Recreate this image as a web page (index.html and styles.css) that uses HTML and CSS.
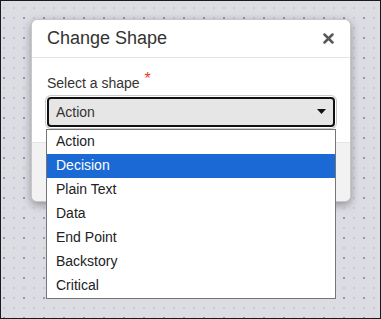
FILE: index.html
```html
<!DOCTYPE html>
<html>
<head>
<meta charset="utf-8">
<link rel="stylesheet" href="styles.css">
</head>
<body>
<div class="canvas">
  <div class="modal">
    <div class="modal-header">
      <span class="modal-title">Change Shape</span>
      <svg class="close" width="11" height="11" viewBox="0 0 11 11"><path d="M1.5 1.5 L9.5 9.5 M9.5 1.5 L1.5 9.5" stroke="#595959" stroke-width="2.5" stroke-linecap="round"/></svg>
    </div>
    <div class="modal-body">
      <div class="label">Select a shape <span class="req">*</span></div>
      <div class="select-wrap">
        <div class="select">
          <span>Action</span>
          <svg class="caret" width="9" height="5" viewBox="0 0 9 5"><path d="M0 0 H9 L4.5 5 Z" fill="#111"/></svg>
        </div>
        <ul class="options">
          <li>Action</li>
          <li class="active">Decision</li>
          <li>Plain Text</li>
          <li>Data</li>
          <li>End Point</li>
          <li>Backstory</li>
          <li>Critical</li>
        </ul>
      </div>
    </div>
    <div class="modal-footer"></div>
  </div>
</div>
</body>
</html>
```
FILE: styles.css
```css
* { box-sizing: border-box; }
html, body { margin: 0; padding: 0; }
body { font-family: "Liberation Sans", Arial, sans-serif; }
.canvas {
  width: 381px;
  height: 319px;
  border: 1px solid #1a1a1a;
  background-color: #dcdce3;
  background-image:
    conic-gradient(at 2px 2px, transparent 75%, #8e96ca 0),
    conic-gradient(at 2px 2px, transparent 75%, #c9cad9 0);
  background-size: 20px 20px, 10px 10px;
  background-position: 2px 16px, 2px 6px;
  padding: 18px 0 0 30px;
  overflow: hidden;
}
.modal {
  width: 320px;
  background: #fff;
  border: 1px solid rgba(0,0,0,0.22);
  border-radius: 6px;
  box-shadow: 0 3px 9px rgba(0,0,0,0.35);
}
.modal-header {
  height: 38px;
  border-bottom: 1px solid #e5e5e5;
  display: flex;
  align-items: center;
  justify-content: space-between;
  padding: 0 16px 0 15px;
}
.modal-title {
  font-size: 18px;
  color: #333;
}
.modal-body {
  padding: 16px 15px 15px 15px;
}
.label {
  font-size: 14px;
  color: #333;
  line-height: 18px;
  margin-bottom: 5px;
}
.req {
  color: #e53935;
  font-size: 16px;
  position: relative;
  top: -4px;
  margin-left: 1px;
}
.select-wrap { position: relative; }
.select {
  height: 30px;
  border: 2px solid #111;
  border-radius: 4px;
  background: #e6e6e6;
  box-shadow: 0 0 0 1px #fff, 0 0 0 2px #c8c8c8;
  display: flex;
  align-items: center;
  justify-content: space-between;
  padding: 0 7px 1px 7px;
  font-size: 14px;
  color: #333;
}
.options {
  position: absolute;
  left: -1px;
  right: -1px;
  top: 32px;
  margin: 0;
  padding: 0;
  list-style: none;
  background: #fff;
  border: 1px solid #767676;
  z-index: 2;
}
.options li {
  height: 24px;
  line-height: 23px;
  padding-left: 9px;
  font-size: 14px;
  color: #222;
}
.options li.active {
  background: #1a69d4;
  color: #fff;
}
.modal-footer {
  height: 59px;
  border-top: 1px solid #e5e5e5;
  background: #f2f2f2;
  border-radius: 0 0 6px 6px;
}
```
